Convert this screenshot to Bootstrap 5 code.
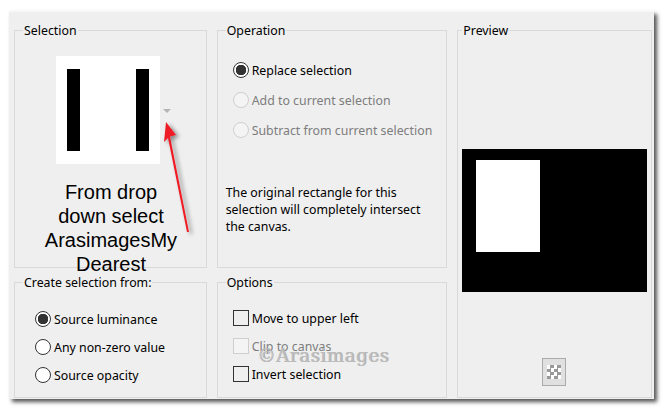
<!DOCTYPE html>
<html lang="en">
<head>
    <meta charset="UTF-8">
    <title>Selection From Mask</title>
    <link rel="stylesheet" href="https://cdn.jsdelivr.net/npm/bootstrap@5.3.0/dist/css/bootstrap.min.css">
    <style>
        html, body {
            height: 411px;
            overflow: hidden;
            background: #fff;
        }
        body {
            font-family: "Noto Sans", "Open Sans", sans-serif;
            font-size: 12.35px;
            line-height: 17px;
            color: #000;
            padding: 11px 0 0 9px;
        }
        .dlg {
            position: relative;
            width: 645px;
            height: 388px;
            background: #efefef;
            border-top: 1px solid #f7f7f7;
            padding: 10px 2px 0 5px;
            box-shadow: 3px 3px 4px #555;
            gap: 10px;
        }
        .grp {
            border: 1px solid #d9d9d9;
            padding: 0 8px;
        }
        .grp legend {
            float: none;
            width: auto;
            margin: 0;
            padding: 0 1px;
            font-size: 12.35px;
            line-height: 17px;
        }
        .col-a { width: 193px; gap: 6px; }
        .col-b { width: 231px; gap: 6px; }
        .col-c { width: 195px; height: 376px; padding: 0 4px; }
        .grp-top { height: 246px; }
        .grp-bot { height: 124px; }
        .thumb {
            width: 104px;
            height: 108px;
            background: #fff;
            margin: 17px 0 0 33px;
            padding: 13px 11px;
        }
        .thumb span {
            width: 13px;
            background: #000;
        }
        .caret-dn {
            position: absolute;
            left: 148px;
            top: 70px;
            width: 0;
            height: 0;
            border: 4px solid transparent;
            border-top: 4px solid #b5b5b5;
        }
        .big-note {
            font-family: "Liberation Sans", Arial, sans-serif;
            font-size: 20px;
            line-height: 24px;
            text-align: center;
            width: 136px;
            margin: 16px 0 0 20px;
            height: 96px;
        }
        .opt-row {
            display: flex;
            align-items: center;
            gap: 3px;
            height: 28px;
        }
        .opt-row.is-off { color: #7d7d7d; }
        .opt-row input.form-check-input {
            margin: 0;
            float: none;
            width: 16px;
            height: 16px;
            background-color: #fff;
            border: 1px solid #333;
            flex: none;
            opacity: 1;
        }
        .opt-row input[type=radio]:checked {
            background-image: radial-gradient(circle, #333 0, #333 5px, #fff 5.5px);
        }
        .opt-row input[type=checkbox] {
            border-radius: 0;
            background-color: #efefef;
        }
        .opt-row input:disabled {
            border-color: #cfcfcf !important;
            background-color: #f4f4f4 !important;
        }
        .opt-list-a { margin: 16px 0 0 7px; }
        .opt-list-a .opt-row { height: 30px; }
        .opt-list-s { margin: 14px 0 0 12px; }
        .opt-list-o { margin: 13px 0 0 7px; }
        .opt-note { margin: 39px 0 0 0; width: 210px; }
        .pv-black {
            height: 143px;
            background: #000;
            margin-top: 110px;
            padding: 11px 0 0 14px;
        }
        .pv-white {
            width: 64px;
            height: 92px;
            background: #fff;
        }
        .chk-btn {
            width: 24px;
            height: 28px;
            background: #e0e0e0;
            border: 1px solid #ababab;
            margin: 66px 0 0 80px;
            padding: 6px 4px;
        }
        .chk-btn i {
            display: block;
            width: 14px;
            height: 14px;
            background: repeating-conic-gradient(#999 0 25%, #fff 0 50%) 0 0 / 7px 7px;
        }
        .arrow-over {
            position: absolute;
            left: 0;
            top: 0;
            pointer-events: none;
        }
        .wm {
            position: absolute;
            left: 248px;
            top: 332px;
            font-family: "DejaVu Serif", serif;
            font-size: 18px;
            line-height: 24px;
            letter-spacing: .7px;
            color: #bdbdbd;
            text-shadow: 1px 0 0 #b0b0b0;
            pointer-events: none;
        }
    </style>
</head>
<body>
<div class="dlg d-flex">
    <!-- left column -->
    <div class="col-a d-flex flex-column">
        <fieldset class="grp grp-top position-relative">
            <legend>Selection</legend>
            <div class="thumb d-flex justify-content-between">
                <span></span>
                <span></span>
            </div>
            <div class="caret-dn"></div>
            <div class="big-note">From drop down select ArasimagesMy Dearest</div>
        </fieldset>
        <fieldset class="grp grp-bot">
            <legend>Create selection from:</legend>
            <div class="opt-list-s">
                <label class="opt-row"><input class="form-check-input" type="radio" name="src" checked>Source luminance</label>
                <label class="opt-row"><input class="form-check-input" type="radio" name="src">Any non-zero value</label>
                <label class="opt-row"><input class="form-check-input" type="radio" name="src">Source opacity</label>
            </div>
        </fieldset>
    </div>
    <!-- middle column -->
    <div class="col-b d-flex flex-column">
        <fieldset class="grp grp-top">
            <legend>Operation</legend>
            <div class="opt-list-a">
                <label class="opt-row"><input class="form-check-input" type="radio" name="op" checked>Replace selection</label>
                <label class="opt-row is-off"><input class="form-check-input" type="radio" name="op" disabled>Add to current selection</label>
                <label class="opt-row is-off"><input class="form-check-input" type="radio" name="op" disabled>Subtract from current selection</label>
            </div>
            <p class="opt-note">The original rectangle for this selection will completely intersect the canvas.</p>
        </fieldset>
        <fieldset class="grp grp-bot">
            <legend>Options</legend>
            <div class="opt-list-o">
                <label class="opt-row"><input class="form-check-input" type="checkbox">Move to upper left</label>
                <label class="opt-row is-off"><input class="form-check-input" type="checkbox" disabled>Clip to canvas</label>
                <label class="opt-row"><input class="form-check-input" type="checkbox">Invert selection</label>
            </div>
        </fieldset>
    </div>
    <!-- preview -->
    <fieldset class="grp col-c">
        <legend>Preview</legend>
        <div class="pv-black"><div class="pv-white"></div></div>
        <div class="chk-btn"><i></i></div>
    </fieldset>

    <!-- overlays: red arrow and watermark -->
    <svg class="arrow-over" width="645" height="388" viewBox="9 12 645 388" xmlns="http://www.w3.org/2000/svg">
        <defs>
            <filter id="arrowShadow" x="-100%" y="-20%" width="300%" height="140%">
                <feDropShadow dx="3" dy="2" stdDeviation="2" flood-color="#000" flood-opacity=".45"/>
            </filter>
        </defs>
        <g filter="url(#arrowShadow)" fill="#ee1c25">
            <path d="M166 122 L176 135 L170 136.500 L189 232 L187 232 L168 138 L164 142 Z"/>
        </g>
    </svg>
    <div class="wm">©Arasimages</div>
</div>
</body>
</html>
